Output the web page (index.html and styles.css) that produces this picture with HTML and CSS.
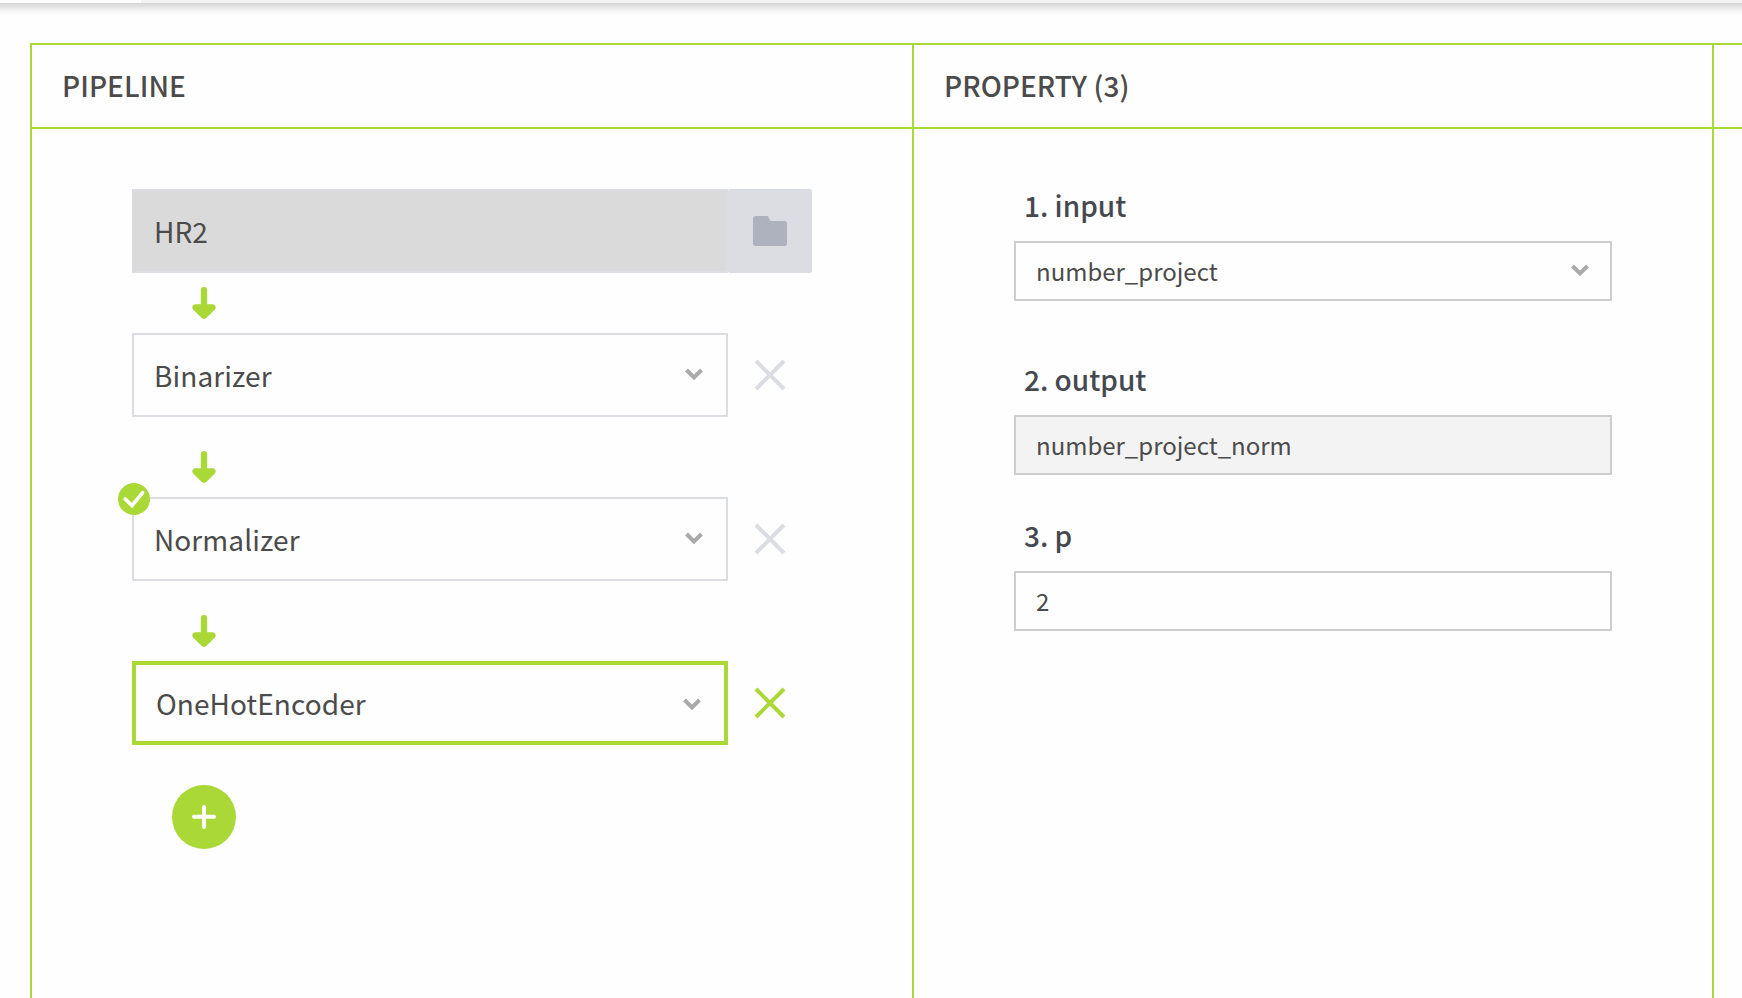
FILE: index.html
```html
<!DOCTYPE html>
<html lang="en">
<head>
<meta charset="utf-8">
<title>Pipeline</title>
<link rel="stylesheet" href="styles.css">
</head>
<body>
<svg class="defs" width="0" height="0">
  <symbol id="arrow" viewBox="0 0 24 32"><path d="M12 0a3.2 3.2 0 0 1 3.2 3.2V17.3H20.5C23.6 17.3 24.8 20.7 22.7 22.7L14.2 31Q12 33 9.8 31L1.300 22.700C-.8 20.700 .4 17.300 3.500 17.300H8.800V3.200A3.200 3.200 0 0 1 12 0z" fill="#aad837"/></symbol>
  <symbol id="chevron" viewBox="0 0 18 13"><path d="M1.500 2L9 9.500L16.500 2" fill="none" stroke="#aaa" stroke-width="4"/></symbol>
  <symbol id="cross" viewBox="0 0 32 32"><path d="M2 2L30 30M30 2L2 30" fill="none" stroke="currentColor" stroke-width="4"/></symbol>
</svg>
<div class="topbar"><div class="tab"></div></div>
<main class="board">
  <section class="column pipeline">
    <h2 class="heading">PIPELINE</h2>
    <div class="steps">
      <div class="step">
        <div class="field source">HR2</div>
        <div class="browse"><svg width="34" height="30" viewBox="0 0 34 30"><path d="M2.500 0H13.500Q15 0 15.700 1.400L17.500 5H31.500Q34 5 34 7.500V27.500Q34 30 31.500 30H2.500Q0 30 0 27.500V2.500Q0 0 2.500 0z" fill="#adb2be"/></svg></div>
      </div>
      <div class="link first"><svg width="24" height="32"><use href="#arrow"/></svg></div>
      <div class="step">
        <div class="field">Binarizer<svg class="chevron" width="18" height="13"><use href="#chevron"/></svg></div>
        <div class="remove"><svg width="32" height="32"><use href="#cross"/></svg></div>
      </div>
      <div class="link"><svg width="24" height="32"><use href="#arrow"/></svg></div>
      <div class="step">
        <div class="field">Normalizer<svg class="chevron" width="18" height="13"><use href="#chevron"/></svg></div>
        <div class="remove"><svg width="32" height="32"><use href="#cross"/></svg></div>
        <svg class="badge" width="32" height="32" viewBox="0 0 32 32"><circle cx="16" cy="16" r="16" fill="#aad837"/><path d="M7.200 16L14 22.500L24.700 9.700" fill="none" stroke="#fff" stroke-width="3.600" stroke-linecap="round"/></svg>
      </div>
      <div class="link"><svg width="24" height="32"><use href="#arrow"/></svg></div>
      <div class="step selected">
        <div class="field">OneHotEncoder<svg class="chevron" width="18" height="13"><use href="#chevron"/></svg></div>
        <div class="remove"><svg width="32" height="32"><use href="#cross"/></svg></div>
      </div>
      <div class="add"><svg width="24" height="24" viewBox="0 0 24 24"><path d="M12 2V22M2 11.700H22" stroke="#fff" stroke-width="4" stroke-linecap="round"/></svg></div>
    </div>
  </section>
  <section class="column property">
    <h2 class="heading">PROPERTY (3)</h2>
    <div class="props">
      <div class="prop wide">
        <div class="label">1. input</div>
        <div class="value">number_project<svg class="chevron" width="18" height="13"><use href="#chevron"/></svg></div>
      </div>
      <div class="prop">
        <div class="label">2. output</div>
        <div class="value disabled">number_project_norm</div>
      </div>
      <div class="prop">
        <div class="label">3. p</div>
        <div class="value">2</div>
      </div>
    </div>
  </section>
  <section class="column rest"><div class="heading"></div></section>
</main>
</body>
</html>
```
FILE: styles.css
```css
* { box-sizing: border-box; }
body {
  margin: 0;
  height: 998px;
  overflow: hidden;
  display: flex;
  flex-direction: column;
  background: #fefefe;
  color: #4b4b4b;
  font-family: "Noto Sans CJK KR", "Noto Sans CJK JP", sans-serif;
}
svg { display: block; flex: none; }
.defs { position: absolute; }
.topbar {
  flex: none;
  height: 43px;
  background: linear-gradient(#d4d4d4, #e5e5e5 4px, #f6f6f6 8px, #fefefe 12px) 0 3px no-repeat;
}
.tab {
  height: 3px;
  margin-left: 141px;
  background: #f2f2f2;
}
.board {
  flex: 1;
  display: flex;
  margin-left: 30px;
  border-top: 2px solid #aad837;
}
.column { border-left: 2px solid #aad837; flex: none; }
.pipeline { width: 882px; }
.property { width: 800px; }
.rest { width: 30px; }
.heading {
  margin: 0;
  height: 84px;
  padding: 0 0 0 30px;
  border-bottom: 2px solid #aad837;
  font-size: 28px;
  font-weight: 500;
  letter-spacing: 0.06px;
  line-height: 80px;
}
.rest .heading { padding: 0; }
.steps { padding: 60px 0 0 100px; }
.step { position: relative; display: flex; width: 680px; height: 84px; }
.field {
  width: 596px;
  display: flex;
  align-items: center;
  justify-content: space-between;
  padding: 0 23px 0 20px;
  border: 2px solid #dcdde2;
  font-size: 28px;
  letter-spacing: 0.08px;
  line-height: 40px;
}
.field .chevron { margin-top: -1px; }
.selected .field .chevron { margin-top: 3px; }
.selected .field { padding-bottom: 1px; }
.source { background: #dadada; }
.browse, .remove {
  width: 84px;
  display: flex;
  align-items: center;
  justify-content: center;
}
.browse { background: #dcdde2; border-radius: 2px; }
.remove { color: #dcdde2; padding-bottom: 1px; }
.selected .field { border: 4px solid #aad837; }
.selected .remove { color: #aad837; }
.link { height: 80px; padding: 34px 0 0 60px; }
.link.first { height: 60px; padding-top: 14px; }
.badge { position: absolute; left: -14px; top: -14px; }
.add {
  display: flex;
  align-items: center;
  justify-content: center;
  width: 64px;
  height: 64px;
  margin: 40px 0 0 40px;
  border-radius: 50%;
  background: #aad837;
}
.props { padding: 56px 0 0 100px; }
.prop { width: 598px; margin-bottom: 40px; }
.prop.wide { margin-bottom: 58px; }
.label {
  height: 56px;
  padding-left: 10px;
  font-size: 28px;
  font-weight: 500;
  line-height: 41px;
  color: #46484f;
}
.value {
  display: flex;
  align-items: center;
  justify-content: space-between;
  height: 60px;
  padding: 0 21px 1px 20px;
  border: 2px solid #cdcdcd;
  font-size: 24px;
  line-height: 36px;
}
.value .chevron { margin-top: 0; }
.disabled { background: #f3f3f3; }
```
